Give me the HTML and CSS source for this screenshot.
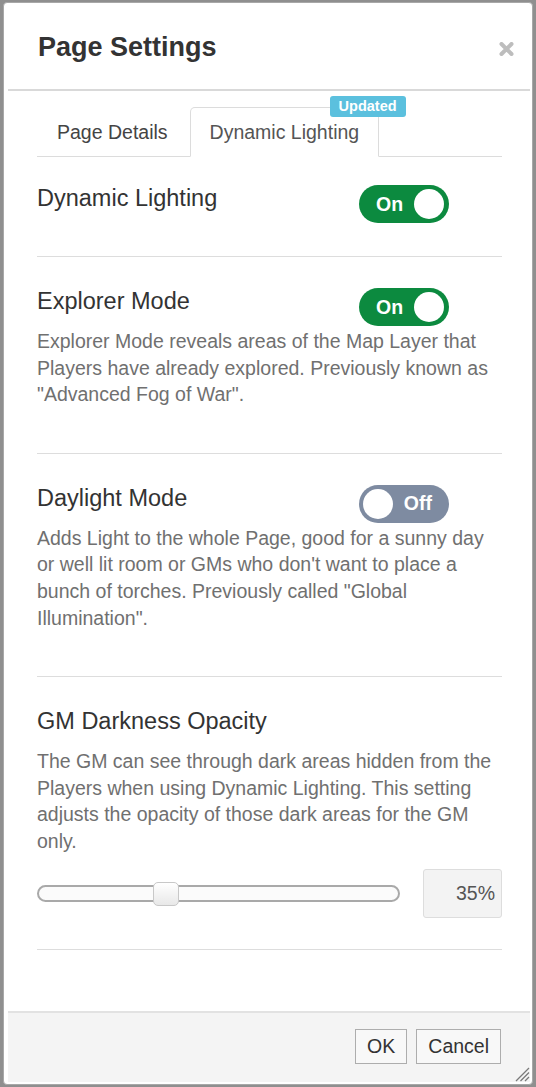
FILE: index.html
```html
<!DOCTYPE html>
<html lang="en">
<head>
    <meta charset="UTF-8">
    <meta name="viewport" content="width=device-width, initial-scale=1.0">
    <title>Page Settings</title>
    <link rel="stylesheet" href="styles.css">
</head>
<body>

    <div class="dialog">

        <!-- header -->
        <div class="dialog-header">
            <h2 class="dialog-title">Page Settings</h2>
            <span class="close">
                <svg width="15" height="14" viewBox="0 0 15 14">
                    <path d="M2.5 2 L12.5 12 M12.5 2 L2.5 12" stroke="#bdbdbd" stroke-width="4" stroke-linecap="round"/>
                </svg>
            </span>
        </div>

        <!-- body -->
        <div class="dialog-body">
            <ul class="tabs">
                <li class="tab">Page Details</li>
                <li class="tab active">Dynamic Lighting<span class="badge">Updated</span></li>
            </ul>

            <div class="tab-content">
                <div class="setting first">
                    <div class="setting-row">
                        <div class="setting-label">Dynamic Lighting</div>
                        <div class="switch on"><span class="switch-text">On</span><span class="knob"></span></div>
                    </div>
                </div>

                <div class="setting">
                    <div class="setting-row">
                        <div class="setting-label">Explorer Mode</div>
                        <div class="switch on"><span class="switch-text">On</span><span class="knob"></span></div>
                    </div>
                    <p class="setting-desc">Explorer Mode reveals areas of the Map Layer that Players have already explored. Previously known as "Advanced Fog of War".</p>
                </div>

                <div class="setting">
                    <div class="setting-row">
                        <div class="setting-label">Daylight Mode</div>
                        <div class="switch off"><span class="knob"></span><span class="switch-text">Off</span></div>
                    </div>
                    <p class="setting-desc">Adds Light to the whole Page, good for a sunny day or well lit room or GMs who don't want to place a bunch of torches. Previously called "Global Illumination".</p>
                </div>

                <div class="setting slider-setting">
                    <div class="setting-row">
                        <div class="setting-label">GM Darkness Opacity</div>
                    </div>
                    <p class="setting-desc">The GM can see through dark areas hidden from the Players when using Dynamic Lighting. This setting adjusts the opacity of those dark areas for the GM only.</p>
                    <div class="slider-row">
                        <div class="slider-track">
                            <span class="slider-thumb" style="left: 114px;"></span>
                        </div>
                        <div class="slider-value">35%</div>
                    </div>
                </div>
            </div>
        </div>

        <!-- footer -->
        <div class="dialog-footer">
            <button class="btn">OK</button>
            <button class="btn">Cancel</button>
        </div>

        <span class="resize-handle">
            <svg width="16" height="16" viewBox="0 0 16 16">
                <path d="M15 2 L2 15 M15 6.5 L6.5 15 M15 11 L11 15" stroke="#7a7a7a" stroke-width="1.3"/>
            </svg>
        </span>
    </div>

</body>
</html>
```

FILE: styles.css
```css
body {
    margin: 0;
    background-color: #8f8f8f;
    font-family: 'Liberation Sans', Arial, sans-serif;
    overflow: hidden;
}

.dialog {
    position: relative;
    box-sizing: border-box;
    height: 1083px;
    margin: 2px 3px;
    padding: 0 2px 2px 4px;
    background-color: white;
    border: 1px solid #a8a8a8;
    border-radius: 4px;
    display: flex;
    flex-direction: column;
}

.dialog-header {
    height: 86px;
    display: flex;
    align-items: center;
    padding: 0 16px 0 30px;
    border-bottom: 2px solid #d9d9d9;
}

.dialog-title {
    margin: 0;
    margin-top: 2px;
    font-size: 27px;
    font-weight: bold;
    color: #333;
}

.close {
    margin-left: auto;
    margin-top: 6px;
    display: flex;
}

.dialog-body {
    flex: 1;
    padding: 0 28px 0 29px;
}

.tabs {
    list-style: none;
    margin: 16px 0 0;
    padding: 0;
    display: flex;
    border-bottom: 1px solid #dcdcdc;
}

.tab {
    position: relative;
    height: 48px;
    line-height: 48px;
    padding: 0 19px;
    margin-right: 2px;
    margin-bottom: -1px;
    font-size: 19.5px;
    color: #444;
    border: 1px solid transparent;
    border-radius: 5px 5px 0 0;
}

.tab.active {
    color: #555;
    background-color: white;
    border-color: #dcdcdc #dcdcdc transparent;
}

.badge {
    position: absolute;
    top: -12px;
    left: 139px;
    height: 21px;
    line-height: 21px;
    padding: 0 9px;
    font-size: 14.5px;
    font-weight: bold;
    color: white;
    background-color: #5bc0de;
    border-radius: 3px;
}

.setting {
    padding: 31px 0 33px;
    border-bottom: 1px solid #dddddd;
}

.setting.first {
    padding-top: 28px;
}

.setting.slider-setting {
    padding-bottom: 31px;
}

.setting-row {
    display: grid;
    grid-template-columns: 322px 90px;
    min-height: 38px;
}

.setting-label {
    font-size: 23.5px;
    line-height: 26px;
    color: #333;
}

.setting-desc {
    margin: 2px 0 12px;
    font-size: 19.5px;
    line-height: 26.6px;
    color: #707070;
}

.switch {
    box-sizing: border-box;
    width: 90px;
    height: 38px;
    border-radius: 19px;
    display: flex;
    align-items: center;
    justify-content: space-between;
}

.switch.on {
    background-color: #0c8a3f;
    padding: 0 5px 0 17px;
}

.switch.off {
    background-color: #7e8ba1;
    padding: 0 17px 0 4px;
}

.switch-text {
    font-size: 19.5px;
    font-weight: bold;
    color: white;
}

.knob {
    width: 30px;
    height: 30px;
    border-radius: 50%;
    background-color: white;
}

.slider-row {
    display: flex;
    align-items: center;
    padding-top: 2px;
}

.slider-track {
    position: relative;
    box-sizing: border-box;
    width: 363px;
    height: 17px;
    border: 2px solid #a9a9a9;
    border-radius: 9px;
    background-color: #fbfbfb;
}

.slider-thumb {
    position: absolute;
    top: -5px;
    box-sizing: border-box;
    width: 26px;
    height: 24px;
    border: 1px solid #c8c8c8;
    border-radius: 5px;
    background: linear-gradient(#ffffff, #e8e8e8);
}

.slider-value {
    margin-left: auto;
    box-sizing: border-box;
    width: 79px;
    height: 49px;
    line-height: 47px;
    padding-right: 6px;
    text-align: right;
    font-size: 19.5px;
    color: #555;
    background-color: #f3f3f3;
    border: 1px solid #dddddd;
    border-radius: 3px;
}

.dialog-footer {
    display: flex;
    justify-content: flex-end;
    gap: 9px;
    padding: 16px 29px 18px 0;
    background-color: #f4f4f4;
    border-top: 2px solid #e2e2e2;
}

.btn {
    height: 35px;
    padding: 0 11px;
    font-family: 'Liberation Sans', Arial, sans-serif;
    font-size: 19.5px;
    color: #333;
    background-color: #f8f8f8;
    border: 1px solid #adadad;
    border-radius: 0;
}

.resize-handle {
    position: absolute;
    right: 2px;
    bottom: 2px;
    display: flex;
}
```
